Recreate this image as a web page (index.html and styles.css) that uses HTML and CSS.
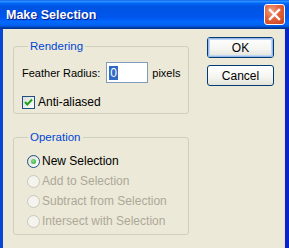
FILE: index.html
```html
<!DOCTYPE html>
<html>
<head>
<meta charset="utf-8">
<link rel="stylesheet" href="styles.css">
</head>
<body>
<div class="window">
  <div class="titlebar">
    <span class="title">Make Selection</span>
    <span class="close">
      <svg width="13" height="13" viewBox="0 0 13 13"><path d="M2 2 L11 11 M11 2 L2 11" stroke="#fff" stroke-width="2.4" stroke-linecap="square"/></svg>
    </span>
  </div>
  <div class="frame">
    <div class="groups">
      <fieldset class="group">
        <legend>Rendering</legend>
        <div class="group-body rendering">
          <div class="row feather">
            <span>Feather Radius:</span>
            <span class="input"><span class="sel">0</span></span>
            <span class="unit">pixels</span>
          </div>
          <div class="row check">
            <span class="checkbox">
              <svg width="11" height="11" viewBox="0 0 11 11"><path d="M2 5 L4.3 7.5 L9 2.5" fill="none" stroke="#21a121" stroke-width="2"/></svg>
            </span>
            <span>Anti-aliased</span>
          </div>
        </div>
      </fieldset>
      <fieldset class="group">
        <legend>Operation</legend>
        <div class="group-body operation">
          <div class="row radio-row"><span class="radio on"><span class="dot"></span></span><span>New Selection</span></div>
          <div class="row radio-row disabled"><span class="radio"></span><span>Add to Selection</span></div>
          <div class="row radio-row disabled"><span class="radio"></span><span>Subtract from Selection</span></div>
          <div class="row radio-row disabled"><span class="radio"></span><span>Intersect with Selection</span></div>
        </div>
      </fieldset>
    </div>
    <div class="buttons">
      <span class="btn default"><span class="btn-in">OK</span></span>
      <span class="btn"><span class="btn-in">Cancel</span></span>
    </div>
  </div>
</div>
</body>
</html>
```

FILE: styles.css
```css
html, body {
  margin: 0;
  padding: 0;
  background: #ece9d8;
}
.window {
  width: 289px;
  height: 248px;
  display: flex;
  flex-direction: column;
  overflow: hidden;
  font-family: "Liberation Sans", Arial, sans-serif;
  font-size: 11px;
  color: #000;
}
.titlebar {
  height: 29px;
  flex: none;
  display: flex;
  align-items: center;
  justify-content: space-between;
  padding: 0 4px 0 6px;
  background: linear-gradient(to bottom, #0058ee 0%, #3593ff 4%, #288eff 6%, #127dff 8%, #036ffc 10%, #0262ee 14%, #0057e5 20%, #0054e3 24%, #0055eb 56%, #005bf5 66%, #026afe 76%, #0062ef 86%, #0052d6 92%, #0040ab 94%, #003092 100%);
}
.title {
  color: #fff;
  font-weight: bold;
  font-size: 12.5px;
  text-shadow: 1px 1px 0 #0a1883;
}
.close {
  width: 19px;
  height: 19px;
  border: 1px solid #fff;
  border-radius: 3px;
  background: radial-gradient(circle at 35% 30%, #f0a080 0%, #e2623c 45%, #c8401b 100%);
  display: flex;
  align-items: center;
  justify-content: center;
}
.frame {
  flex: 1;
  display: flex;
  border-left: 3px solid #0846d8;
  border-right: 4px solid #0625c8;
  box-shadow: inset -1px 0 0 #f5d8c8;
  padding: 8px 11px 0 10px;
}
.groups {
  width: 176px;
  flex: none;
  margin-top: 2px;
  display: flex;
  flex-direction: column;
  gap: 16px;
}
.group {
  margin: 0;
  padding: 0;
  border: 1px solid #d0d0bf;
  border-radius: 3px;
  min-width: 0;
}
.group legend {
  color: #0046d5;
  padding: 0 2px;
  margin-left: 14px;
  line-height: 14px;
  font-size: 11.5px;
}
.group-body {
  display: flex;
  flex-direction: column;
}
.rendering {
  padding: 9px 0 1px 8px;
}
.operation {
  padding: 7px 0 3px 13px;
}
.row {
  display: flex;
  align-items: center;
  font-size: 12px;
  white-space: nowrap;
}
.feather {
  height: 21px;
  font-size: 11px;
}
.input {
  width: 38px;
  height: 19px;
  margin-left: 6px;
  border: 1px solid #7f9db9;
  background: #fff;
  display: flex;
  align-items: center;
  padding-left: 2px;
  box-sizing: content-box;
  flex: none;
}
.unit {
  margin-left: 4px;
}
.sel {
  background: #316ac5;
  color: #fff;
  line-height: 14px;
  padding: 0 1px;
  font-size: 12px;
}
.check {
  height: 20px;
  margin-top: 9px;
  gap: 3px;
}
.checkbox {
  width: 11px;
  height: 11px;
  border: 1px solid #1c5180;
  background: linear-gradient(135deg, #dcdcd7, #fff);
  display: flex;
}
.radio-row {
  height: 20px;
  gap: 2px;
}
.radio {
  width: 11px;
  height: 11px;
  border: 1px solid #1c5180;
  border-radius: 50%;
  background: linear-gradient(135deg, #dcdcd7, #fff);
  display: flex;
  align-items: center;
  justify-content: center;
}
.dot {
  width: 5px;
  height: 5px;
  border-radius: 50%;
  background: radial-gradient(circle at 40% 40%, #8fe08f, #21a121);
}
.disabled {
  color: #aca899;
}
.disabled .radio {
  border-color: #cac8bb;
  background: #f4f3ee;
}
.buttons {
  margin-left: auto;
  display: flex;
  flex-direction: column;
  gap: 7px;
}
.btn {
  width: 67px;
  height: 21px;
  box-sizing: border-box;
  border: 1px solid #003c74;
  border-radius: 3px;
  background: linear-gradient(to bottom, #fff 0%, #f4f4f0 60%, #e3e3db 100%);
  display: flex;
  font-size: 12px;
}
.btn-in {
  flex: 1;
  display: flex;
  align-items: center;
  justify-content: center;
}
.btn.default .btn-in {
  box-shadow: inset 0 0 0 1px #98b8ea, inset 0 0 0 2px #c0d6f7;
  border-radius: 2px;
}
```
